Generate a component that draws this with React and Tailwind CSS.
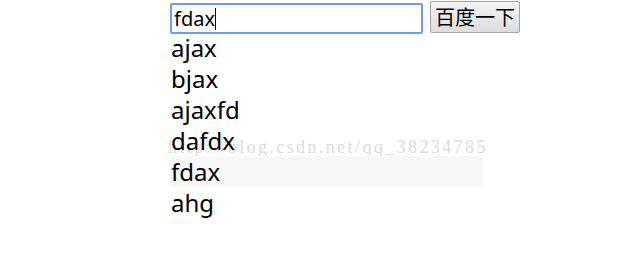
import React from 'react';

const items = ['ajax', 'bjax', 'ajaxfd', 'dafdx', 'fdax', 'ahg'];

const App = () => {
  return (
    <div className="relative w-[640px] h-[275px] bg-white pl-[170px] pt-[3px]" style={{ fontFamily: '"Noto Sans", "Noto Sans CJK SC", sans-serif' }}>
      <div className="flex items-start">
        <div className="w-[253px] h-[31px] border-2 border-[#6a9ef0] rounded-[2px] flex items-center pl-[2px] text-[20px] text-black">
          <span className="leading-none">fdax</span>
          <span className="w-px h-[22px] bg-black" />
        </div>
        <button className="ml-[7px] -mt-[2px] w-[90px] h-[32px] border border-[#a3a3a3] rounded-[2px] bg-gradient-to-b from-[#f4f4f4] to-[#dedede] text-[20px] leading-none text-black flex items-center justify-center" style={{ fontFamily: '"Noto Sans CJK SC", sans-serif' }}>
          百度一下
        </button>
      </div>
      <div
        className="absolute left-[168px] top-[137px] text-[18px] leading-[20px] tracking-[2.4px] text-[#dcdcdc]"
        style={{ fontFamily: '"Liberation Serif", serif' }}
      >
        http://blog.csdn.net/qq_38234785
      </div>
      <ul className="relative ml-[1px] -mt-[2px] w-[312px]">
        {items.map((item) => (
          <li
            key={item}
            className={`h-[31px] leading-[31px] text-[24px] text-black ${item === 'fdax' ? 'bg-[#f7f7f7]' : ''}`}
          >
            {item}
          </li>
        ))}
      </ul>
    </div>
  );
};

export default App;
